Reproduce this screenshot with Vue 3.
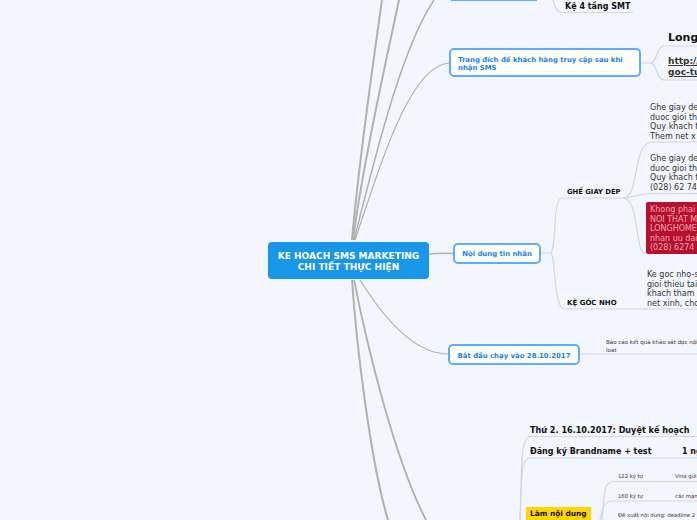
<script setup>
const links = [
  { d: 'M352 240C358 170 372 70 382 0', w: 2 },
  { d: 'M353 240C362 170 384 70 399 0', w: 2 },
  { d: 'M354 240C372 170 400 50 434 0', w: 1.5 },
  { d: 'M355 240C382 160 410 66 449 63', w: 1.2 },
  { d: 'M429 254C438 253 445 253 453 253.5', w: 1.5 },
  { d: 'M360 280C385 320 415 354 448 354', w: 1.2 },
  { d: 'M352 280C356 340 370 460 388 520', w: 2 },
  { d: 'M354 280C368 350 395 460 426 520', w: 1.8 }
]
const thin = [
  'M553 0C556 8 556 12.5 563 12.5H633',
  'M641 63H650C658 63 655 46 665 46H697',
  'M650 63C658 63 655 80 665 80H697',
  'M540 253H550C557 253 552 198 562 198H623',
  'M550 253C557 253 552 309 565 309H697',
  'M623 198C640 198 632 143 652 142H697',
  'M623 198C632 198 634 195 650 193.5H697',
  'M623 198C640 198 634 254 646 254',
  'M579 354H697',
  'M520 520C522 470 520 437 530 436.5H697',
  'M520 520C522 480 520 458 530 458H697',
  'M602 520C605 490 603 482 615 481.5H697',
  'M600 520C602 510 603 501 612 501H697'
]
</script>

<template>
  <div class="map">
    <svg class="lines" width="697" height="520" viewBox="0 0 697 520">
      <path v-for="l in links" :key="l.d" :d="l.d" :stroke-width="l.w" class="main" />
      <path v-for="d in thin" :key="d" :d="d" class="thin" />
    </svg>

    <div class="root">KE HOACH SMS MARKETING<br>CHI TIẾT THỰC HIỆN</div>
    <div class="topic cut"></div>
    <div class="topic landing">Trang đích để khách hàng truy cập sau khi nhận SMS</div>
    <div class="topic content">Nội dung tin nhắn</div>
    <div class="topic start">Bắt đầu chạy vào 28.10.2017</div>

    <div class="label shelf4">Kệ 4 tầng SMT</div>
    <div class="label long">Long</div>
    <div class="label url">http://<br>goc-tu</div>
    <div class="label shoe">GHẾ GIÀY DÉP</div>
    <div class="label nook">KỆ GÓC NHO</div>
    <div class="copy c1">Ghe giay de<br>duoc gioi th<br>Quy khach t<br>Them net x</div>
    <div class="copy c2">Ghe giay de<br>duoc gioi th<br>Quy khach t<br>(028) 62 74</div>
    <div class="copy promo">Khong phai<br>NOI THAT M<br>LONGHOME<br>nhan uu dai<br>(028) 6274</div>
    <div class="copy c3">Ke goc nho-s<br>gioi thieu tai<br>khach tham<br>net xinh, cho</div>
    <div class="tiny report">Báo cáo kết quả khảo sát dọc nội<br>loat</div>
    <div class="label d1">Thứ 2. 16.10.2017: Duyệt kế hoạch</div>
    <div class="label d2">Đăng ký Brandname + test</div>
    <div class="label d3">1 ng</div>
    <div class="label write">Làm nội dung</div>
    <div class="tiny t1">122 ký tự</div>
    <div class="tiny t2">Vina gửi</div>
    <div class="tiny t3">160 ký tự</div>
    <div class="tiny t4">các mạn</div>
    <div class="tiny t5">Đề xuất nội dung: deadline 2</div>
  </div>
</template>

<style>
html, body { margin: 0; background: #f3f6fe; }
</style>

<style scoped>
.map { position: relative; width: 697px; height: 520px; overflow: hidden; background: #f3f6fe; font-family: "DejaVu Sans", sans-serif; }
.lines { position: absolute; inset: 0; }
.main { fill: none; stroke: #b0b0ae; }
.thin { fill: none; stroke: #d3d6de; stroke-width: 1.2; }
.root { position: absolute; left: 268px; top: 242px; width: 161px; height: 37px; box-sizing: border-box; padding-top: 9px; border-radius: 4px; background: #1896e8; color: #fff; font-size: 9.05px; line-height: 11px; font-weight: 700; text-align: center; }
.topic { position: absolute; box-sizing: border-box; background: #fff; border: 2px solid #62abf6; border-radius: 5px; color: #1b82e6; font-weight: 700; font-size: 6.9px; white-space: nowrap; }
.cut { left: 451px; top: -30px; width: 86px; height: 31px; background: #f3f6fe; border-width: 0 0 2px; border-radius: 0; }
.landing { left: 449px; top: 48px; width: 192px; height: 29px; padding: 6px 7px; white-space: normal; line-height: 8px; }
.content { left: 453px; top: 243px; width: 88px; height: 21px; line-height: 18px; text-align: center; }
.start { left: 448px; top: 344px; width: 132px; height: 21px; line-height: 20px; text-align: center; }
.label { position: absolute; color: #111; font-weight: 700; white-space: nowrap; }
.shelf4 { left: 565px; top: 1px; font-size: 8px; line-height: 12px; }
.long { left: 668px; top: 31px; font-size: 11px; line-height: 14px; }
.url { left: 668px; top: 56px; font-size: 9px; line-height: 11px; color: #333; text-decoration: underline; }
.shoe { left: 567px; top: 187px; font-size: 6.8px; line-height: 10px; }
.nook { left: 567px; top: 298px; font-size: 7px; line-height: 10px; }
.copy { position: absolute; left: 650px; width: 60px; overflow: hidden; white-space: nowrap; color: #333; font-size: 8px; line-height: 9.6px; }
.c1 { top: 103px; }
.c2 { top: 154px; }
.promo { top: 202px; left: 646px; width: 60px; height: 52px; box-sizing: border-box; padding: 3px 4px; border-radius: 2px; background: #b70f2e; color: #f2a6b2; }
.c3 { top: 270px; left: 647px; }
.tiny { position: absolute; color: #333; font-size: 5.3px; line-height: 7px; white-space: nowrap; }
.report { left: 606px; top: 338px; line-height: 8px; font-size: 5.5px; }
.d1 { left: 530px; top: 424px; font-size: 8.1px; line-height: 12px; }
.d2 { left: 530px; top: 446px; font-size: 8px; line-height: 12px; }
.d3 { left: 682px; top: 446px; font-size: 8px; line-height: 12px; }
.write { left: 526px; top: 507px; width: 65px; height: 13px; padding-left: 4px; box-sizing: border-box; background: #ffd505; font-size: 7.4px; line-height: 13px; }
.t1 { left: 618px; top: 473px; }
.t2 { left: 675px; top: 473px; }
.t3 { left: 618px; top: 493px; }
.t4 { left: 675px; top: 493px; }
.t5 { left: 618px; top: 512px; }
</style>
